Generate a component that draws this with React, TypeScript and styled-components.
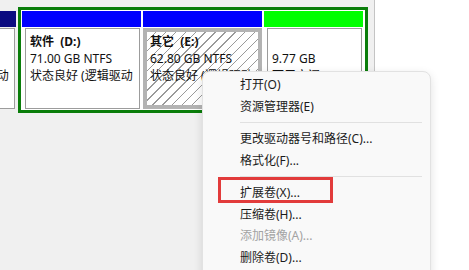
import React from "react";
import styled, { createGlobalStyle } from "styled-components";

const GlobalStyle = createGlobalStyle`
  html, body { margin: 0; padding: 0; background: #ffffff; }
  body { font-family: "Noto Sans", "Noto Sans CJK SC", sans-serif; }
`;

const Screen = styled.div`
  position: relative;
  width: 469px;
  height: 270px;
  overflow: hidden;
  display: flex;
  background: #ffffff;
`;

const DiskPane = styled.div`
  width: 375px;
  flex: none;
  height: 100%;
  box-sizing: border-box;
  padding-top: 7px;
  background: #f0f0f0;
  border-right: 1px solid #c4c4c4;
  overflow: hidden;
`;

const RightPane = styled.div`
  flex: 1;
  background: #ffffff;
`;

const DiskRow = styled.div`
  display: flex;
  align-items: flex-start;
  gap: 2px;
`;

const Extended = styled.div`
  display: flex;
  gap: 2px;
  padding: 1px 2px 1px 1px;
  border: 3px solid #0a7d0a;
  background: #ffffff;
`;

const Partition = styled.div<{ $w: number; $shift?: number }>`
  width: ${(p) => p.$w}px;
  flex: none;
  display: flex;
  flex-direction: column;
  gap: 1px;
  margin-left: ${(p) => p.$shift ?? 0}px;
  margin-top: ${(p) => (p.$shift ? 4 : 0)}px;
`;

const Header = styled.div<{ $color: string }>`
  height: 16px;
  background: ${(p) => p.$color};
`;

const Body = styled.div<{ $hatched?: boolean }>`
  height: 81px;
  box-sizing: border-box;
  overflow: hidden;
  white-space: pre;
  color: #111111;
  font-size: 12px;
  line-height: 17px;
  ${(p) =>
    p.$hatched
      ? `
    border: 4px solid #b3b3b3;
    padding: 1px 0 0 3px;
    background: repeating-linear-gradient(135deg, #ffffff 0 6px, #9a9a9a 6px 7px);
  `
      : `
    margin: 0 1px 0 3px;
    border: 1px solid #9c9c9c;
    padding: 4px 0 0 4px;
    background: #ffffff;
  `}
`;

const Name = styled.div`
  font-weight: 700;
`;

const Line = styled.div``;

const ContextMenu = styled.div`
  position: absolute;
  left: 202px;
  top: 71px;
  width: 229px;
  height: 220px;
  box-sizing: border-box;
  padding-top: 2px;
  background: #f9f9f9;
  border: 1px solid #e2e2e2;
  border-radius: 8px;
  box-shadow: 0 3px 10px rgba(0, 0, 0, 0.12);
  font-family: "Noto Sans", "Noto Sans CJK SC", sans-serif;
`;

const Item = styled.div<{ $disabled?: boolean }>`
  position: relative;
  height: 21.5px;
  line-height: 21.5px;
  padding-left: 37px;
  font-size: 12px;
  color: ${(p) => (p.$disabled ? "#a3a3a3" : "#1b1b1b")};
  white-space: nowrap;
`;

const Separator = styled.div`
  height: 1px;
  margin: 5px 8px 5px 37px;
  background: #e1e1e1;
`;

const Highlight = styled.div`
  position: absolute;
  left: 15px;
  top: -5px;
  width: 115px;
  height: 26px;
  box-sizing: border-box;
  border: 3px solid #e23b3b;
`;

export default function App() {
  return (
    <>
      <GlobalStyle />
      <Screen>
        <DiskPane>
          <DiskRow>
            <Partition $w={118} $shift={-102}>
              <Header $color="#0b0b80" />
              <Body>
                <Line> </Line>
                <Line> </Line>
                <Line>状态良好 (逻辑驱动</Line>
              </Body>
            </Partition>
            <Extended>
              <Partition $w={119}>
                <Header $color="#0000ff" />
                <Body>
                  <Name>软件  (D:)</Name>
                  <Line>71.00 GB NTFS</Line>
                  <Line>状态良好 (逻辑驱动</Line>
                </Body>
              </Partition>
              <Partition $w={119}>
                <Header $color="#0000ff" />
                <Body $hatched>
                  <Name>其它  (E:)</Name>
                  <Line>62.80 GB NTFS</Line>
                  <Line>状态良好 (逻辑驱动</Line>
                </Body>
              </Partition>
              <Partition $w={99}>
                <Header $color="#00ff00" />
                <Body>
                  <Line> </Line>
                  <Line>9.77 GB</Line>
                  <Line>可用空间</Line>
                </Body>
              </Partition>
            </Extended>
          </DiskRow>
        </DiskPane>
        <RightPane />
        <ContextMenu>
          <Item>打开(O)</Item>
          <Item>资源管理器(E)</Item>
          <Separator />
          <Item>更改驱动器号和路径(C)...</Item>
          <Item>格式化(F)...</Item>
          <Separator />
          <Item>
            扩展卷(X)...
            <Highlight />
          </Item>
          <Item>压缩卷(H)...</Item>
          <Item $disabled>添加镜像(A)...</Item>
          <Item>删除卷(D)...</Item>
        </ContextMenu>
      </Screen>
    </>
  );
}
